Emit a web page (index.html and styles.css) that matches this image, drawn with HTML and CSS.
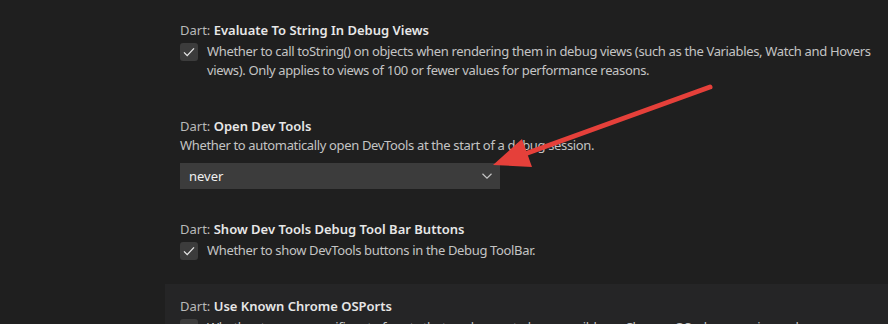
FILE: index.html
```html
<!DOCTYPE html>
<html lang="en">
<head>
<meta charset="UTF-8">
<meta name="viewport" content="width=device-width, initial-scale=1.0">
<title>Settings</title>
<link rel="stylesheet" href="styles.css">
</head>
<body>
  <div class="settings-list">
    <div class="setting">
      <div class="setting-title"><span class="category">Dart: </span>Evaluate To String In Debug Views</div>
      <div class="check-row">
        <span class="checkbox"><svg width="14" height="14" viewBox="0 0 14 14"><path d="M2 7.4 L5.2 10.6 L12 3.4" fill="none" stroke="#e8e8e8" stroke-width="1.3"/></svg></span>
        <span class="desc">Whether to call toString() on objects when rendering them in debug views (such as the Variables, Watch and Hovers views). Only applies to views of 100 or fewer values for performance reasons.</span>
      </div>
    </div>

    <div class="setting setting-select">
      <div class="setting-title"><span class="category">Dart: </span>Open Dev Tools</div>
      <div class="desc">Whether to automatically open DevTools at the start of a debug session.</div>
      <div class="select-box">
        <span>never</span>
        <svg width="12" height="8" viewBox="0 0 12 8"><path d="M1.5 1.8 L6 6.2 L10.5 1.8" fill="none" stroke="#c5c5c5" stroke-width="1.2"/></svg>
      </div>
    </div>

    <div class="setting">
      <div class="setting-title"><span class="category">Dart: </span>Show Dev Tools Debug Tool Bar Buttons</div>
      <div class="check-row">
        <span class="checkbox"><svg width="14" height="14" viewBox="0 0 14 14"><path d="M2 7.4 L5.2 10.6 L12 3.4" fill="none" stroke="#e8e8e8" stroke-width="1.3"/></svg></span>
        <span class="desc">Whether to show DevTools buttons in the Debug ToolBar.</span>
      </div>
    </div>

    <div class="setting focused">
      <div class="setting-title"><span class="category">Dart: </span>Use Known Chrome OSPorts</div>
      <div class="check-row">
        <span class="checkbox"></span>
        <span class="desc">Whether to use a specific set of ports that are known to be accessible on Chrome OS when running web applications in the browser.</span>
      </div>
    </div>
  </div>

  <!-- annotation arrow drawn over the screenshot -->
  <svg class="arrow" width="888" height="324" viewBox="0 0 888 324">
    <line x1="710" y1="87" x2="522" y2="155" stroke="#e5403a" stroke-width="5" stroke-linecap="round"/>
    <polygon points="493,165 522,139 532,167" fill="#e5403a"/>
  </svg>
</body>
</html>
```

FILE: styles.css
```css
body {
  margin: 0;
  padding: 0;
  background-color: #1f1f1f; /* editor background */
  font-family: "Noto Sans", "Open Sans", sans-serif;
  font-size: 13px;
  color: #cccccc;
  height: 324px;
  overflow: hidden;
}

.settings-list {
  margin-left: 165px;
  padding-top: 8px;
}

.setting {
  padding: 13px 15px 24px;
}

.setting-select {
  padding-bottom: 18px;
}

.focused {
  background-color: #252526; /* hovered row */
}

.setting-title {
  line-height: 18px;
  font-weight: 600;
  color: #e7e7e7;
}

.category {
  font-weight: 400;
  color: #b9b9b9;
}

.desc {
  line-height: 19px;
  color: #c4c4c4;
  letter-spacing: -0.35px;
}

.setting-select .desc {
  margin-top: 1px;
}

.check-row {
  display: flex;
  align-items: flex-start;
  gap: 9px;
  margin-top: 3px;
}

.checkbox {
  flex: none;
  width: 18px;
  height: 18px;
  margin-top: 1px;
  border-radius: 3px;
  background-color: #3c3c3c;
  display: flex;
  align-items: center;
  justify-content: center;
}

.select-box {
  width: 320px;
  height: 26px;
  margin-top: 8px;
  box-sizing: border-box;
  padding: 0 7px 0 9px;
  background-color: #3c3c3c;
  color: #f0f0f0;
  display: flex;
  align-items: center;
  justify-content: space-between;
}

.arrow {
  position: absolute;
  left: 0;
  top: 0;
}
```
